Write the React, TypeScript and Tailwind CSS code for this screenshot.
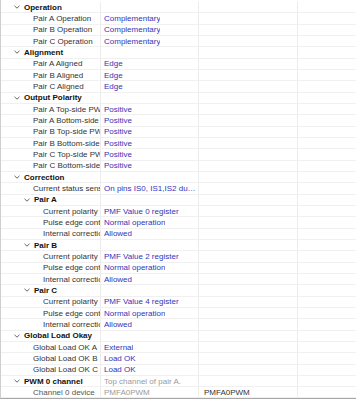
import React from "react"

type Row = {
  label: string
  level: number
  header?: boolean
  value?: string
  muted?: boolean
  extra?: string
}

const rows: Row[] = [
  { label: "Operation", level: 0, header: true },
  { label: "Pair A Operation", level: 1, value: "Complementary" },
  { label: "Pair B Operation", level: 1, value: "Complementary" },
  { label: "Pair C Operation", level: 1, value: "Complementary" },
  { label: "Alignment", level: 0, header: true },
  { label: "Pair A Aligned", level: 1, value: "Edge" },
  { label: "Pair B Aligned", level: 1, value: "Edge" },
  { label: "Pair C Aligned", level: 1, value: "Edge" },
  { label: "Output Polarity", level: 0, header: true },
  { label: "Pair A Top-side PWM", level: 1, value: "Positive" },
  { label: "Pair A Bottom-side PWM", level: 1, value: "Positive" },
  { label: "Pair B Top-side PWM", level: 1, value: "Positive" },
  { label: "Pair B Bottom-side PWM", level: 1, value: "Positive" },
  { label: "Pair C Top-side PWM", level: 1, value: "Positive" },
  { label: "Pair C Bottom-side PWM", level: 1, value: "Positive" },
  { label: "Correction", level: 0, header: true },
  { label: "Current status sensing", level: 1, value: "On pins IS0, IS1,IS2 during deadtime" },
  { label: "Pair A", level: 1, header: true },
  { label: "Current polarity", level: 2, value: "PMF Value 0 register" },
  { label: "Pulse edge control", level: 2, value: "Normal operation" },
  { label: "Internal correction", level: 2, value: "Allowed" },
  { label: "Pair B", level: 1, header: true },
  { label: "Current polarity", level: 2, value: "PMF Value 2 register" },
  { label: "Pulse edge control", level: 2, value: "Normal operation" },
  { label: "Internal correction", level: 2, value: "Allowed" },
  { label: "Pair C", level: 1, header: true },
  { label: "Current polarity", level: 2, value: "PMF Value 4 register" },
  { label: "Pulse edge control", level: 2, value: "Normal operation" },
  { label: "Internal correction", level: 2, value: "Allowed" },
  { label: "Global Load Okay", level: 0, header: true },
  { label: "Global Load OK A", level: 1, value: "External" },
  { label: "Global Load OK B", level: 1, value: "Load OK" },
  { label: "Global Load OK C", level: 1, value: "Load OK" },
  { label: "PWM 0 channel", level: 0, header: true, value: "Top channel of pair A.", muted: true },
  { label: "Channel 0 device", level: 1, value: "PMFA0PWM", muted: true, extra: "PMFA0PWM" },
]

function Chevron() {
  return (
    <svg width="6" height="4" viewBox="0 0 6 4" className="shrink-0">
      <polyline points="0.5,0.8 3,3.2 5.5,0.8" fill="none" stroke="#555" strokeWidth="0.9" />
    </svg>
  )
}

function PropRow({ r }: { r: Row }) {
  const pad = r.header
    ? r.level === 0
      ? "pl-[13px]"
      : "pl-[23px]"
    : r.level === 1
    ? "pl-[32px]"
    : "pl-[42px]"
  const isMutedName = r.muted && !r.header
  return (
    <div className="flex h-[11.33px] border-b border-[#f0f0f0] leading-[11px]">
      <div className={`w-[100px] shrink-0 overflow-hidden whitespace-nowrap border-r border-[#ececec] flex items-center ${pad}`}>
        {r.header && <Chevron />}
        <span
          className={
            r.header
              ? "ml-[4px] font-bold text-[#111]"
              : isMutedName
              ? "text-[#555]"
              : "text-[#333]"
          }
        >
          {r.label}
        </span>
      </div>
      <div className="w-[98px] shrink-0 overflow-hidden border-r border-[#ececec] pl-[3px] flex items-center">
        <span
          className={`block truncate ${r.muted ? "text-[#9a9a9a]" : "text-[#3434b8]"}`}
        >
          {r.value ?? ""}
        </span>
      </div>
      <div className="w-[99px] shrink-0 overflow-hidden border-r border-[#ececec] pl-[5px] flex items-center">
        <span className="text-[#333]">{r.extra ?? ""}</span>
      </div>
      <div className="flex-1" />
    </div>
  )
}

export default function App() {
  return (
    <div
      className="w-[356px] h-[400px] bg-white overflow-hidden text-[8px]"
      style={{ fontFamily: '"Liberation Sans", Arial, sans-serif' }}
    >
      <div className="h-[399px] border-l border-[#cfcfcf] border-b border-b-[#a8a8a8] pt-[2px] overflow-hidden">
        {rows.map((r, i) => (
          <PropRow key={i} r={r} />
        ))}
      </div>
    </div>
  )
}
